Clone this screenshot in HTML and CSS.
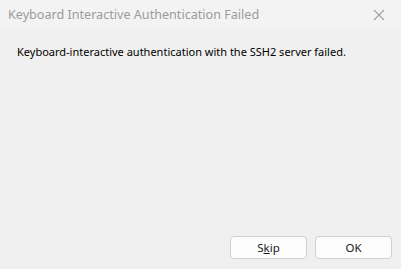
FILE: index.html
```html
<!DOCTYPE html>
<html>
<head>
<meta charset="utf-8">
<link rel="stylesheet" href="styles.css">
</head>
<body>
<div class="dialog">
  <div class="titlebar">
    <span class="title">Keyboard Interactive Authentication Failed</span>
    <svg class="close" width="12" height="12" viewBox="0 0 12 12"><path d="M1 1 L11 11 M11 1 L1 11" stroke="#a0a0a0" stroke-width="1.1" fill="none"/></svg>
  </div>
  <div class="content">
    <p class="message">Keyboard-interactive authentication with the SSH2 server failed.</p>
  </div>
  <div class="buttons">
    <button class="btn">S<u>k</u>ip</button>
    <button class="btn">OK</button>
  </div>
</div>
</body>
</html>
```
FILE: styles.css
```css
html, body {
  margin: 0;
  padding: 0;
  width: 401px;
  height: 269px;
  overflow: hidden;
  background: #f0f0f0;
  font-family: "Noto Sans", "Open Sans", sans-serif;
}
.dialog {
  display: flex;
  flex-direction: column;
  height: 269px;
}
.titlebar {
  height: 29px;
  background: #f3f3f3;
  display: flex;
  align-items: center;
  justify-content: space-between;
  padding: 0 16px 0 8px;
}
.title {
  color: #9b9b9b;
  font-size: 12.6px;
}
.close { display: block; }
.content {
  flex: 1;
  padding: 15px 17px 0 17px;
}
.message {
  margin: 0;
  font-size: 11px;
  color: #000;
}
.buttons {
  display: flex;
  justify-content: flex-end;
  gap: 8px;
  padding: 0 9px 10px 0;
}
.btn {
  width: 77px;
  height: 23px;
  background: #fdfdfd;
  border: 1px solid #d0d0d0;
  border-radius: 4px;
  font-family: inherit;
  font-size: 11.5px;
  color: #1a1a1a;
  padding: 0;
}
.btn u { text-decoration-thickness: 1px; }
```
